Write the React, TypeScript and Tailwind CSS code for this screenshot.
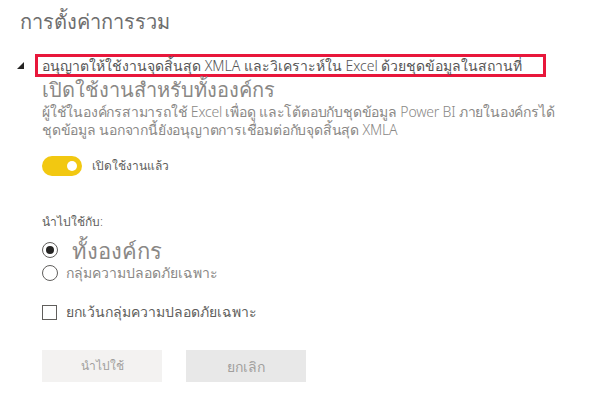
export default function App() {
    return (
        <div
            className="w-[610px] h-[403px] bg-white text-[#605e5c] overflow-hidden font-light"
            style={{ fontFamily: '"Noto Sans", "DejaVu Sans", sans-serif' }}
        >
            <div className="pl-[20px] pt-[8px] text-[20px] leading-[28px] text-[#6e6e6e]">
                การตั้งค่าการรวม
            </div>
            <div className="flex items-start mt-[18px] pl-[17px]">
                <svg width="7" height="7" viewBox="0 0 7 7" className="mt-[8px] shrink-0">
                    <polygon points="7,0 7,7 0,7" fill="#252423" />
                </svg>
                <div className="ml-[11px]">
                    <div className="w-[511px] h-[23px] border-[3px] border-[#e8173b] pl-[4px] text-[14px] leading-[17px] text-[#555] whitespace-nowrap">
                        อนุญาตให้ใช้งานจุดสิ้นสุด XMLA และวิเคราะห์ใน Excel ด้วยชุดข้อมูลในสถานที่
                    </div>
                    <div className="pl-[7px]">
                        <div className="text-[20px] leading-[26px] text-[#8a8886]">
                            เปิดใช้งานสำหรับทั้งองค์กร
                        </div>
                        <div className="text-[14px] leading-[18px] text-[#8a8886] whitespace-nowrap tracking-[-0.2px]">
                            <div>ผู้ใช้ในองค์กรสามารถใช้ Excel เพื่อดู และโต้ตอบกับชุดข้อมูล Power BI ภายในองค์กรได้</div>
                            <div>ชุดข้อมูล นอกจากนี้ยังอนุญาตการเชื่อมต่อกับจุดสิ้นสุด XMLA</div>
                        </div>
                        <div className="flex items-center mt-[17px] gap-[10px]">
                            <div className="w-[40px] h-[20px] rounded-full bg-[#f2c811] flex items-center justify-end pr-[5px]">
                                <div className="w-[10px] h-[10px] rounded-full bg-white" />
                            </div>
                            <span className="text-[12px] text-[#605e5c]">เปิดใช้งานแล้ว</span>
                        </div>
                        <div className="mt-[38px] text-[12px] leading-[16px] text-[#605e5c]">นำไปใช้กับ:</div>
                        <div className="flex items-center mt-[9px] gap-[14px]">
                            <div className="w-[16px] h-[16px] rounded-full border border-[#605e5c] flex items-center justify-center">
                                <div className="w-[8px] h-[8px] rounded-full bg-[#252423]" />
                            </div>
                            <span className="text-[22px] leading-[22px] text-[#8a8886]">ทั้งองค์กร</span>
                        </div>
                        <div className="flex items-center mt-[2px] gap-[8px]">
                            <div className="w-[16px] h-[16px] rounded-full border border-[#605e5c]" />
                            <span className="text-[14px] leading-[20px] text-[#8a8886]">กลุ่มความปลอดภัยเฉพาะ</span>
                        </div>
                        <div className="flex items-center mt-[19px] gap-[9px]">
                            <div className="w-[15px] h-[15px] border border-[#605e5c]" />
                            <span className="text-[14px] leading-[20px] text-[#605e5c]">ยกเว้นกลุ่มความปลอดภัยเฉพาะ</span>
                        </div>
                        <div className="flex mt-[28px] gap-[24px]">
                            <button className="w-[120px] h-[32px] bg-[#f3f2f1] text-[12px] text-[#a19f9d]">นำไปใช้</button>
                            <button className="w-[120px] h-[32px] bg-[#e8e8e8] text-[14px] text-[#a19f9d]">ยกเลิก</button>
                        </div>
                    </div>
                </div>
            </div>
        </div>
    )
}
